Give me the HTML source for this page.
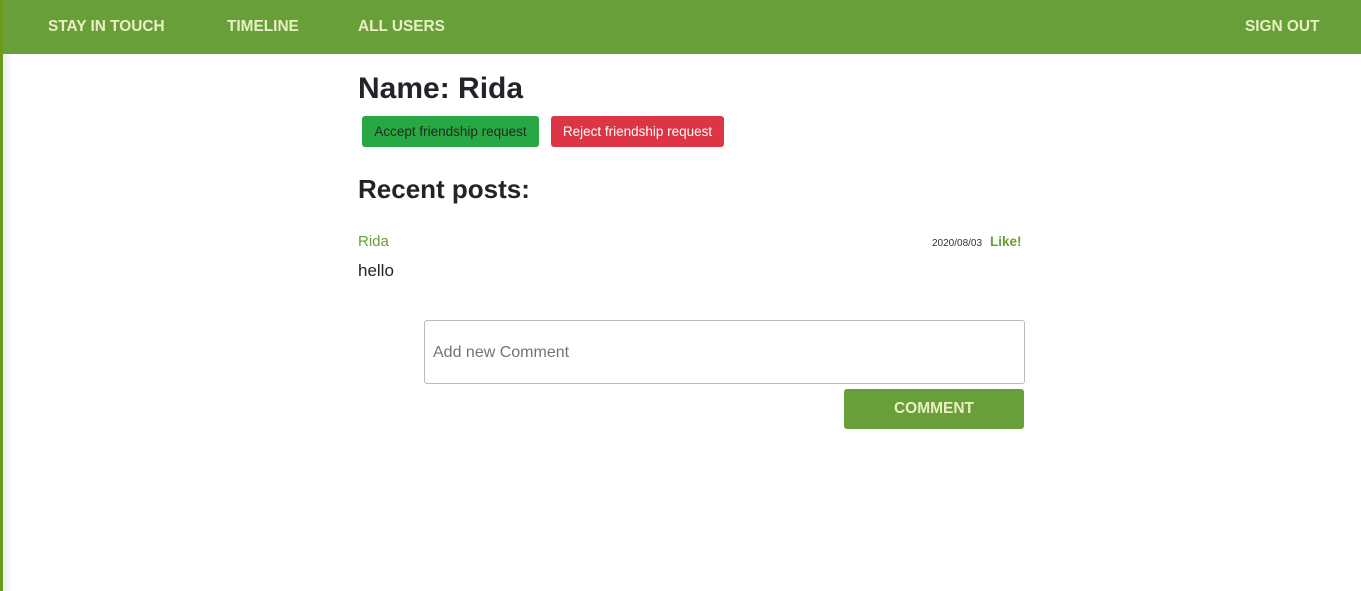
<!DOCTYPE html>
<html><head><style>
body{margin:0;width:1361px;height:591px;overflow:hidden;background:#fff;font-family:"Liberation Sans",sans-serif;position:relative;color:#212529}
.lb{position:absolute;left:0;top:0;width:3px;height:591px;background:#6b9a1c}
.sh{position:absolute;left:3px;top:54px;width:10px;height:537px;background:linear-gradient(to right,#eee,#fff)}
nav{position:absolute;left:0;top:0;width:1361px;height:54px;background:#689f38}
nav a{position:absolute;top:18px;color:#e8f0c4;font-weight:bold;font-size:15.4px;text-decoration:none}
h1{position:absolute;left:358px;top:72px;margin:0;font-size:30px;font-weight:bold}
h2{position:absolute;left:358px;top:174px;margin:0;font-size:26px;font-weight:bold}
.btn{position:absolute;top:116px;height:31px;border-radius:3px;font-size:14px;line-height:31px;text-align:center}
</style></head><body>
<nav>
<a style="left:48px">STAY IN TOUCH</a>
<a style="left:227px">TIMELINE</a>
<a style="left:358px">ALL USERS</a>
<a style="left:1245px">SIGN OUT</a>
</nav>
<div class="lb"></div><div class="sh"></div>
<h1>Name: Rida</h1>
<div class="btn" style="left:362px;width:177px;background:#28a745;color:#1d2a1d;font-size:13.5px">Accept friendship request</div>
<div class="btn" style="left:551px;width:173px;background:#dc3545;color:#fff;font-size:13.5px">Reject friendship request</div>
<h2>Recent posts:</h2>
<div style="position:absolute;left:358px;top:233px;color:#689f38;font-size:15px">Rida</div>
<div style="position:absolute;left:932px;top:238px;font-size:10px;color:#333">2020/08/03</div>
<div style="position:absolute;left:990px;top:234px;font-size:13.5px;font-weight:bold;color:#689f38">Like!</div>
<div style="position:absolute;left:358px;top:261px;font-size:17px">hello</div>
<div style="position:absolute;left:424px;top:320px;width:599px;height:62px;border:1px solid #bbb;border-radius:3px"></div>
<div style="position:absolute;left:433px;top:344px;font-size:16px;color:#6c757d">Add new Comment</div>
<div style="position:absolute;left:844px;top:389px;width:180px;height:40px;background:#689f38;border-radius:3px;color:#e8f0c4;font-weight:bold;font-size:15.5px;line-height:40px;text-align:center">COMMENT</div>
</body></html>
